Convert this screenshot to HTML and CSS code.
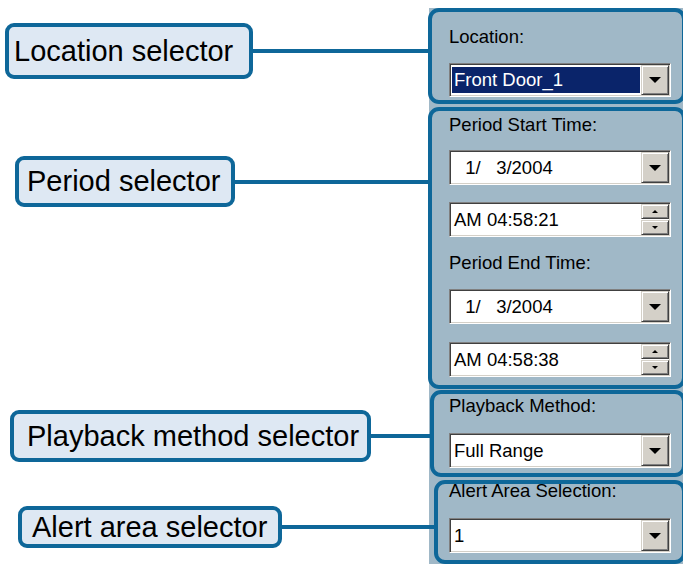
FILE: index.html
```html
<!DOCTYPE html>
<html>
<head>
<meta charset="utf-8">
<link rel="stylesheet" href="styles.css">
</head>
<body>
<div class="page">
  <div class="row row-loc">
    <div class="callout callout-loc">
      <div class="tag tag-loc">Location selector</div>
      <div class="wire"></div>
    </div>
    <section class="panel panel-loc">
      <div class="cap">Location:</div>
      <div class="combo combo-sel gap-loc"><span class="val">Front Door_1</span><span class="drop"><i class="tri"></i></span></div>
    </section>
  </div>

  <div class="row row-period">
    <div class="callout callout-period">
      <div class="tag tag-period">Period selector</div>
      <div class="wire"></div>
    </div>
    <section class="panel panel-period">
      <div class="cap">Period Start Time:</div>
      <div class="combo gap-a"><span class="val date">&#8199;1/ &#8199;3/2004</span><span class="drop"><i class="tri"></i></span></div>
      <div class="combo gap-b"><span class="val">AM 04:58:21</span><span class="spin"><span class="spin-btn"><i class="tri-up"></i></span><span class="spin-btn"><i class="tri-dn"></i></span></span></div>
      <div class="cap gap-c">Period End Time:</div>
      <div class="combo gap-a"><span class="val date">&#8199;1/ &#8199;3/2004</span><span class="drop"><i class="tri"></i></span></div>
      <div class="combo gap-d"><span class="val">AM 04:58:38</span><span class="spin"><span class="spin-btn"><i class="tri-up"></i></span><span class="spin-btn"><i class="tri-dn"></i></span></span></div>
    </section>
  </div>

  <div class="row row-play">
    <div class="callout callout-play">
      <div class="tag tag-play">Playback method selector</div>
      <div class="wire"></div>
    </div>
    <section class="panel panel-play">
      <div class="cap">Playback Method:</div>
      <div class="combo gap-play"><span class="val">Full Range</span><span class="drop"><i class="tri"></i></span></div>
    </section>
  </div>

  <div class="row row-alert">
    <div class="callout callout-alert">
      <div class="tag tag-alert">Alert area selector</div>
      <div class="wire"></div>
    </div>
    <section class="panel panel-alert">
      <div class="cap cap-clip">Alert Area Selection:</div>
      <div class="combo gap-alert"><span class="val">1</span><span class="drop"><i class="tri"></i></span></div>
    </section>
  </div>
</div>
</body>
</html>
```

FILE: styles.css
```css
* { box-sizing: border-box; }

html, body {
  margin: 0;
  width: 683px;
  height: 565px;
  overflow: hidden;
  background: #fff;
}

body {
  padding-top: 8px;
  font-family: "Liberation Sans", Arial, sans-serif;
  color: #000;
}

.page {
  display: flex;
  flex-direction: column;
  background: linear-gradient(to right, #fff 429px, #a0b8c7 429px);
}

.row {
  display: flex;
  align-items: flex-start;
}

.row-period { margin-top: 3px; }
.row-play { margin-top: 1px; }
.row-alert { margin-top: 3px; }

/* callouts */
.callout {
  flex: 1;
  display: flex;
  align-items: center;
  min-width: 0;
}

.callout-loc { margin-top: 15px; padding-left: 5px; }
.callout-period { margin-top: 49px; padding-left: 15px; }
.callout-play { margin-top: 20px; padding-left: 10px; }
.callout-alert { margin-top: 26px; padding-left: 18px; }

.tag {
  flex: none;
  display: flex;
  align-items: center;
  border: 4px solid #0e6799;
  border-radius: 9px;
  background: #dee8f3;
  font-size: 29px;
  white-space: nowrap;
  color: #000;
  overflow: hidden;
}

.tag-loc { height: 56px; width: 248px; padding-left: 5px; }
.tag-period { height: 51px; width: 220px; padding-left: 8px; }
.tag-play { height: 52px; width: 361px; padding-left: 13px; }
.tag-alert { height: 42px; width: 264px; padding-left: 10px; }

.wire {
  flex: 1;
  height: 4px;
  background: #0e6799;
}

/* panels */
.panel {
  flex: none;
  border: 4px solid #0e6799;
  border-radius: 11px;
  background: #a0b8c7;
  overflow: hidden;
  margin-right: -3px;
  font-size: 18.5px;
  color: #000;
}

.panel-loc { width: 258px; padding: 14px 0 3px 17px; }
.panel-period { width: 258px; padding: 3px 0 8px 17px; }
.panel-play { width: 256px; padding: 1px 0 5px 15px; }
.panel-alert { width: 252px; padding: 0 0 7px 11px; }

.cap {
  height: 22px;
  line-height: 22px;
  white-space: nowrap;
}

.cap-clip { margin-top: -4px; }

.gap-loc { margin-top: 15px; }
.gap-a { margin-top: 14px; }
.gap-b { margin-top: 17px; }
.gap-c { margin-top: 15px; }
.gap-d { margin-top: 18px; }
.gap-play { margin-top: 16px; }
.gap-alert { margin-top: 16px; }

.cap.gap-c + .gap-a { margin-top: 15px; }

/* windows combo */
.combo {
  display: flex;
  width: 222px;
  height: 35px;
  background: #fff;
  border: 1px solid;
  border-color: #808080 #fff #fff #808080;
  box-shadow: inset 1px 1px #404040, inset -1px -1px #d4d0c8;
  padding: 1px;
}

.panel-loc .combo { height: 34px; }

.val {
  flex: 1;
  line-height: 31px;
  padding-left: 3px;
  white-space: nowrap;
  overflow: hidden;
}

.combo-sel .val {
  background: #0a246a;
  color: #fff;
  margin: 2px 1px;
  line-height: 26px;
  padding-left: 2px;
}

.date { padding-left: 4px; }

.drop {
  flex: none;
  width: 28px;
  display: flex;
  align-items: center;
  justify-content: center;
  background: #d4d0c8;
  border: 1px solid;
  border-color: #d4d0c8 #404040 #404040 #d4d0c8;
  box-shadow: inset 1px 1px #fff, inset -1px -1px #808080;
}

.tri {
  width: 0;
  height: 0;
  border-left: 6px solid transparent;
  border-right: 6px solid transparent;
  border-top: 6px solid #000;
}

.spin {
  flex: none;
  width: 28px;
  display: flex;
  flex-direction: column;
  gap: 1px;
  background: #fff;
}

.spin-btn {
  flex: 1;
  display: flex;
  align-items: center;
  justify-content: center;
  background: #d4d0c8;
  border: 1px solid;
  border-color: #d4d0c8 #404040 #404040 #d4d0c8;
  box-shadow: inset 1px 1px #fff, inset -1px -1px #808080;
}

.tri-up {
  width: 0;
  height: 0;
  border-left: 3px solid transparent;
  border-right: 3px solid transparent;
  border-bottom: 3px solid #000;
}

.tri-dn {
  width: 0;
  height: 0;
  border-left: 3px solid transparent;
  border-right: 3px solid transparent;
  border-top: 3px solid #000;
}
```
